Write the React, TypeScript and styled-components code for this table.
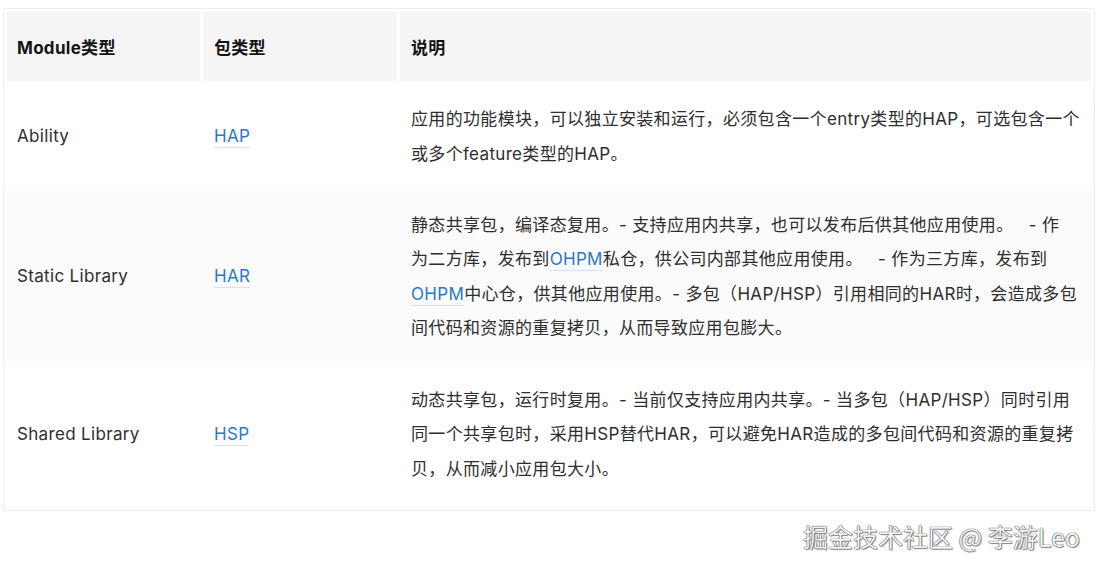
import React from 'react';
import styled, { createGlobalStyle } from 'styled-components';

const GlobalStyle = createGlobalStyle`
  html, body {
    margin: 0;
    padding: 0;
    background: #ffffff;
  }
  body {
    font-family: Inter, "Noto Sans CJK SC", sans-serif;
    -webkit-font-smoothing: antialiased;
  }
`;

const Page = styled.div`
  width: 1098px;
  height: 570px;
  padding: 8px 3px 0;
  box-sizing: border-box;
  overflow: hidden;
`;

const Table = styled.div`
  border: 1px solid #eeeeee;
  padding: 3px 3px 3px;
`;

const Row = styled.div<{ $height: number; $tint?: boolean }>`
  display: grid;
  grid-template-columns: 193px 194px 1fr;
  column-gap: 3px;
  height: ${(p) => p.$height}px;
  background: ${(p) => (p.$tint ? '#fbfbfc' : '#ffffff')};
`;

const HeadCell = styled.div<{ $first?: boolean }>`
  display: flex;
  align-items: center;
  padding: 0 11px 0 ${(p) => (p.$first ? 10 : 11)}px;
  background: #f5f5f5;
  font-size: 17px;
  font-weight: 700;
  letter-spacing: 0.3px;
  color: #141414;
`;

const Cell = styled.div<{ $first?: boolean }>`
  display: flex;
  flex-direction: column;
  justify-content: center;
  padding: 1px 11px 0 ${(p) => (p.$first ? 10 : 11)}px;
  font-size: 17px;
  line-height: 34.5px;
  letter-spacing: 0.33px;
  color: #2e2e2e;
`;

const Line = styled.div`
  white-space: pre;
  height: 34.5px;
`;

const Link = styled.span`
  color: #2a78c9;
  border-bottom: 1px solid #d3e3f5;
  padding-bottom: 1px;
`;

const Watermark = styled.div`
  margin-top: 10px;
  padding-right: 15px;
  text-align: right;
  font-family: "Noto Sans CJK SC", sans-serif;
  font-size: 25px;
  line-height: 30px;
  color: #f4f4f4;
  text-shadow: 0 0 1px #3a3a3a, 0 0 1px #3a3a3a, 1px 1px 1px rgba(0, 0, 0, 0.4);
`;

type Seg = string | { link: string };

type RowData = {
  module: string;
  pkg: string;
  height: number;
  tint?: boolean;
  lines: Seg[][];
};

const rows: RowData[] = [
  {
    module: 'Ability',
    pkg: 'HAP',
    height: 110,
    lines: [
      ['应用的功能模块，可以独立安装和运行，必须包含一个entry类型的HAP，可选包含一个'],
      ['或多个feature类型的HAP。'],
    ],
  },
  {
    module: 'Static Library',
    pkg: 'HAR',
    height: 170,
    tint: true,
    lines: [
      ['静态共享包，编译态复用。- 支持应用内共享，也可以发布后供其他应用使用。   - 作'],
      ['为二方库，发布到', { link: 'OHPM' }, '私仓，供公司内部其他应用使用。   - 作为三方库，发布到'],
      [{ link: 'OHPM' }, '中心仓，供其他应用使用。- 多包（HAP/HSP）引用相同的HAR时，会造成多包'],
      ['间代码和资源的重复拷贝，从而导致应用包膨大。'],
    ],
  },
  {
    module: 'Shared Library',
    pkg: 'HSP',
    height: 146,
    lines: [
      ['动态共享包，运行时复用。- 当前仅支持应用内共享。- 当多包（HAP/HSP）同时引用'],
      ['同一个共享包时，采用HSP替代HAR，可以避免HAR造成的多包间代码和资源的重复拷'],
      ['贝，从而减小应用包大小。'],
    ],
  },
];

const App = () => (
  <>
    <GlobalStyle />
    <Page>
      <Table>
        <Row $height={69}>
          <HeadCell $first>Module类型</HeadCell>
          <HeadCell>包类型</HeadCell>
          <HeadCell>说明</HeadCell>
        </Row>
        {rows.map((row) => (
          <Row key={row.module} $height={row.height} $tint={row.tint}>
            <Cell $first>{row.module}</Cell>
            <Cell>
              <div>
                <Link>{row.pkg}</Link>
              </div>
            </Cell>
            <Cell>
              {row.lines.map((line, i) => (
                <Line key={i}>
                  {line.map((seg, j) =>
                    typeof seg === 'string' ? seg : <Link key={j}>{seg.link}</Link>
                  )}
                </Line>
              ))}
            </Cell>
          </Row>
        ))}
      </Table>
      <Watermark>掘金技术社区 @ 李游Leo</Watermark>
    </Page>
  </>
);

export default App;
